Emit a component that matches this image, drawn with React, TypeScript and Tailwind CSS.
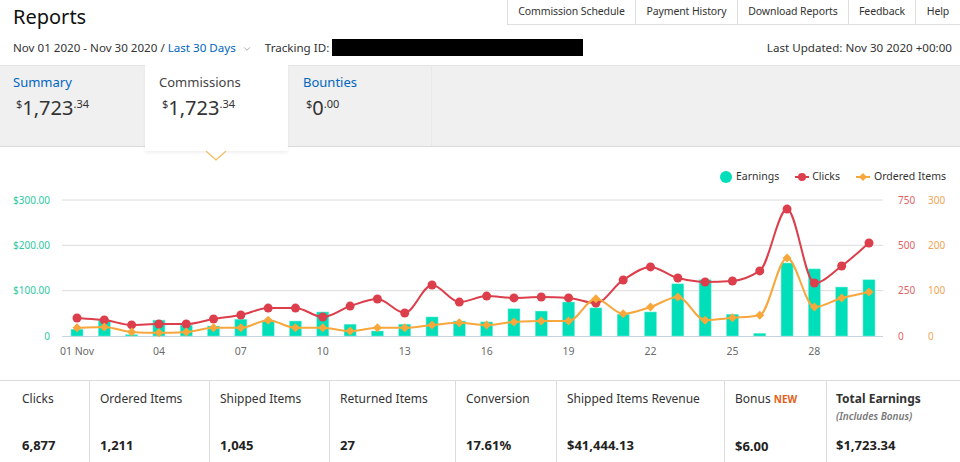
import { ChevronDown } from 'lucide-react';

const earnings = [15, 35, 3, 35, 24, 22, 37, 35, 33, 53, 26, 11, 26, 42, 33, 31, 60, 55, 75, 62, 48, 53, 115, 124, 48, 6, 161, 148, 108, 124];
const clicks = [99, 88, 61, 66, 66, 94, 116, 154, 154, 105, 165, 204, 127, 281, 187, 220, 210, 215, 210, 182, 309, 381, 320, 298, 303, 359, 700, 292, 386, 513];
const ordered = [18, 20, 9, 7, 9, 18, 18, 35, 18, 18, 11, 18, 18, 24, 29, 24, 31, 33, 33, 82, 49, 64, 86, 35, 40, 46, 172, 64, 84, 97];

// plot geometry (svg coords)
const TOP = 15;
const BASE = 151;
const H = BASE - TOP;
const xAt = (i: number) => 77 + i * 27.31;

// monotone cubic, same idea as d3's curveMonotoneX
function smoothPath(pts: [number, number][]) {
  const n = pts.length;
  const dx: number[] = [];
  const m: number[] = [];
  for (let i = 0; i < n - 1; i++) {
    dx[i] = pts[i + 1][0] - pts[i][0];
    m[i] = (pts[i + 1][1] - pts[i][1]) / dx[i];
  }
  const t: number[] = [m[0]];
  for (let i = 1; i < n - 1; i++) {
    if (m[i - 1] * m[i] <= 0) t[i] = 0;
    else t[i] = (3 * (dx[i - 1] + dx[i])) / ((2 * dx[i] + dx[i - 1]) / m[i - 1] + (dx[i] + 2 * dx[i - 1]) / m[i]);
  }
  t[n - 1] = m[n - 2];
  let d = `M${pts[0][0]},${pts[0][1]}`;
  for (let i = 0; i < n - 1; i++) {
    const h = dx[i] / 3;
    d += ` C${pts[i][0] + h},${pts[i][1] + t[i] * h} ${pts[i + 1][0] - h},${pts[i + 1][1] - t[i + 1] * h} ${pts[i + 1][0]},${pts[i + 1][1]}`;
  }
  return d;
}

const navTabs = [
  { label: 'Commission Schedule', w: 'w-[127px]' },
  { label: 'Payment History', w: 'w-[102px]' },
  { label: 'Download Reports', w: 'w-[111px]' },
  { label: 'Feedback', w: 'w-[67px]' },
  { label: 'Help', w: 'w-[45px]' },
];

const stats = [
  { label: 'Clicks', value: '6,877', w: 'w-[89px] pl-[22px]' },
  { label: 'Ordered Items', value: '1,211', w: 'w-[120px] pl-[10px] border-l' },
  { label: 'Shipped Items', value: '1,045', w: 'w-[120px] pl-[10px] border-l' },
  { label: 'Returned Items', value: '27', w: 'w-[126px] pl-[10px] border-l' },
  { label: 'Conversion', value: '17.61%', w: 'w-[101px] pl-[10px] border-l' },
  { label: 'Shipped Items Revenue', value: '$41,444.13', w: 'w-[168px] pl-[10px] border-l' },
];

function Amount({ whole, cents }: { whole: string; cents: string }) {
  return (
    <div className="flex items-start text-[#333] mt-[5px] ml-[3px]">
      <span className="text-[11px] leading-[14px] mt-[1px]">$</span>
      <span className="text-[20px] leading-[24px]">{whole}</span>
      <span className="text-[11px] leading-[14px] mt-[1px]">.{cents}</span>
    </div>
  );
}

function Chart() {
  const clickPts = clicks.map((v, i) => [xAt(i), BASE - (v * H) / 750] as [number, number]);
  const orderPts = ordered.map((v, i) => [xAt(i), BASE - (v * H) / 300] as [number, number]);
  const grid = [0, 1, 2, 3].map((k) => BASE - (k * H) / 3);
  const ticks = [0, 3, 6, 9, 12, 15, 18, 21, 24, 27];

  return (
    <svg width="960" height="196" className="block" style={{ fontFamily: '"Noto Sans", sans-serif' }}>
      {grid.slice(1).map((y) => (
        <line key={y} x1="62" x2="883" y1={y} y2={y} stroke="#dcdcdc" strokeWidth="1" />
      ))}
      <line x1="62" x2="883" y1={BASE + 0.5} y2={BASE + 0.5} stroke="#c7d3e3" strokeWidth="1" />

      {['0', '$100.00', '$200.00', '$300.00'].map((t, k) => (
        <text key={t} x="50" y={grid[k] + 3.5} textAnchor="end" fontSize="10" fill="#2fc9a2">{t}</text>
      ))}
      {['0', '250', '500', '750'].map((t, k) => (
        <text key={t} x="898" y={grid[k] + 3.5} fontSize="10" fill="#de5f66">{t}</text>
      ))}
      {['0', '100', '200', '300'].map((t, k) => (
        <text key={t} x="928" y={grid[k] + 3.5} fontSize="10" fill="#f1a556">{t}</text>
      ))}

      {ticks.map((i) => (
        <text key={i} x={xAt(i)} y="170" textAnchor="middle" fontSize="10.5" fill="#6b6b6b">
          {i === 0 ? '01 Nov' : String(i + 1).padStart(2, '0')}
        </text>
      ))}

      {earnings.map((v, i) => {
        const h = (v * H) / 300;
        return <rect key={i} x={xAt(i) - 6} y={BASE - h} width="12" height={h} fill="#00dfb9" stroke="#7ef0d9" strokeWidth="0.5" />;
      })}

      <path d={smoothPath(clickPts)} fill="none" stroke="#dc3f4b" strokeWidth="2" />
      {clickPts.map(([x, y], i) => (
        <circle key={i} cx={x} cy={y} r="4.5" fill="#dc3f4b" />
      ))}

      <path d={smoothPath(orderPts)} fill="none" stroke="#f8a73c" strokeWidth="2" />
      {orderPts.map(([x, y], i) => (
        <path key={i} d={`M${x},${y - 4.5} L${x + 4.5},${y} L${x},${y + 4.5} L${x - 4.5},${y} Z`} fill="#f8a73c" />
      ))}
    </svg>
  );
}

export default function App() {
  return (
    <div className="w-[960px] h-[462px] overflow-hidden bg-white text-[#111] font-['Noto_Sans',sans-serif]">
      {/* header */}
      <div className="flex justify-between h-[34px]">
        <h1 className="pl-[13px] pt-[3px] text-[20px] leading-[28px] text-[#111]">Reports</h1>
        <div className="flex h-[25px] border-l border-b border-[#dedede]">
          {navTabs.map((t, i) => (
            <div
              key={t.label}
              className={`${t.w} flex items-center justify-center text-[10.5px] tracking-[-0.1px] text-[#333] ${i > 0 ? 'border-l border-[#dedede]' : ''}`}
            >
              {t.label}
            </div>
          ))}
        </div>
      </div>

      {/* date / tracking row */}
      <div className="flex items-center justify-between h-[28px] pl-[13px] pr-[8px] text-[11.6px] text-[#333]">
        <div className="flex items-center">
          <span>Nov 01 2020 - Nov 30 2020 /&nbsp;</span>
          <span className="text-[#0066c0]">Last 30 Days</span>
          <ChevronDown className="w-[10px] h-[10px] ml-[6px] mt-[2px] text-[#777]" strokeWidth={1.5} />
          <span className="ml-[13px]">Tracking ID:</span>
          <div className="ml-[3px] w-[251px] h-[17px] bg-black" />
        </div>
        <span>Last Updated: Nov 30 2020 +00:00</span>
      </div>

      {/* summary band */}
      <div className="mt-[3px] h-[82px] flex bg-[#f0f0f0] border-t border-[#e4e4e4] border-b border-b-[#dadada]">
        <div className="w-[145px] pl-[13px] pt-[7px]">
          <div className="text-[13px] leading-[18px] text-[#0066c0]">Summary</div>
          <Amount whole="1,723" cents="34" />
        </div>
        <div className="relative w-[143px] h-[86px] -mt-px bg-white pl-[14px] pt-[8px] shadow-[0_2px_3px_rgba(0,0,0,0.06)] z-10">
          <div className="text-[13px] leading-[18px] text-[#444]">Commissions</div>
          <Amount whole="1,723" cents="34" />
          <svg className="absolute left-[60px] top-[86px]" width="22" height="10">
            <path d="M1,0 L11,9 L21,0" fill="#fff" stroke="#f6b95c" strokeWidth="1.2" />
          </svg>
        </div>
        <div className="w-[144px] pl-[15px] pt-[7px] border-r border-[#e9e9e9]">
          <div className="text-[13px] leading-[18px] text-[#0066c0]">Bounties</div>
          <Amount whole="0" cents="00" />
        </div>
      </div>

      {/* chart */}
      <div className="h-[233px]">
        <div className="flex justify-end items-center gap-[16px] pt-[22px] h-[38px] pr-[14px] text-[10.5px] text-[#333]">
          <div className="flex items-center">
            <span className="w-[12px] h-[12px] rounded-full bg-[#00dfb9] mr-[4px]" />
            Earnings
          </div>
          <div className="flex items-center">
            <svg width="14" height="10" className="mr-[3px]">
              <line x1="0" x2="14" y1="5" y2="5" stroke="#dc3f4b" strokeWidth="2" />
              <circle cx="7" cy="5" r="4" fill="#dc3f4b" />
            </svg>
            Clicks
          </div>
          <div className="flex items-center">
            <svg width="14" height="10" className="mr-[4px]">
              <line x1="0" x2="14" y1="5" y2="5" stroke="#f8a73c" strokeWidth="2" />
              <path d="M7,1 L11,5 L7,9 L3,5 Z" fill="#f8a73c" />
            </svg>
            Ordered Items
          </div>
        </div>
        <Chart />
      </div>

      {/* totals */}
      <div className="flex border-t border-[#dcdcdc] h-[82px]">
        {stats.map((s) => (
          <div key={s.label} className={`${s.w} border-[#dcdcdc] pt-[9px]`}>
            <div className="text-[12px] leading-[17px] text-[#333]">{s.label}</div>
            <div className="mt-[29px] text-[13px] font-bold text-[#222]">{s.value}</div>
          </div>
        ))}
        <div className="w-[102px] pl-[10px] border-l border-[#dcdcdc] pt-[9px]">
          <div className="text-[12px] leading-[17px] text-[#333]">
            Bonus <span className="text-[10px] font-bold text-[#e4601a]">NEW</span>
          </div>
          <div className="mt-[29px] text-[13px] font-bold text-[#222]">$6.00</div>
        </div>
        <div className="w-[134px] pl-[9px] border-l border-[#dcdcdc] pt-[9px]">
          <div className="text-[12px] leading-[17px] font-bold text-[#333]">Total Earnings</div>
          <div className="mt-[2px] text-[10px] leading-[14px] italic font-semibold text-[#777]">(Includes Bonus)</div>
          <div className="mt-[13px] text-[13px] font-bold text-[#222]">$1,723.34</div>
        </div>
      </div>
    </div>
  );
}
